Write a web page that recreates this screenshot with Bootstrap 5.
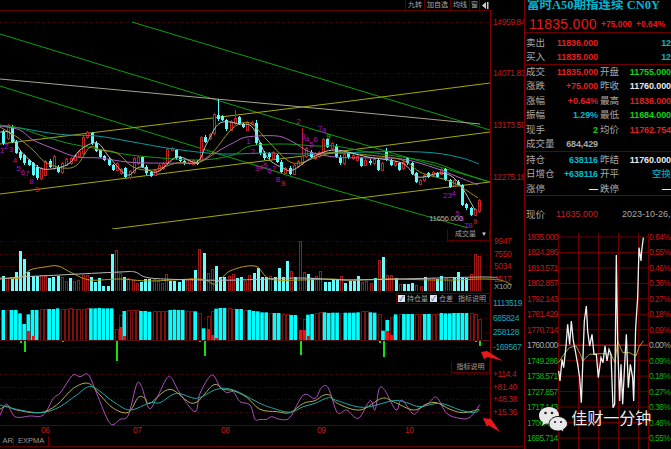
<!DOCTYPE html>
<html lang="zh-CN">
<head>
    <meta charset="UTF-8">
    <meta name="viewport" content="width=device-width, initial-scale=1.0">
    <title>富时A50期指连续</title>
    <link href="https://cdn.jsdelivr.net/npm/bootstrap@5.3.0/dist/css/bootstrap.min.css" rel="stylesheet">
    <style>
        html, body {
            background-color: #000;
            margin: 0;
            height: 449px;
            overflow: hidden;
            font-family: "Liberation Sans", "Noto Sans CJK SC", sans-serif;
            font-size: 9px;
            line-height: 1;
            color: #a8a8a8;
        }
        svg { display: block; }
        svg text { font-family: "Liberation Sans", "Noto Sans CJK SC", sans-serif; letter-spacing: -.4px; }
        #tickChart text { letter-spacing: -.6px; }
        .chart-pane { width: 524px; height: 449px; flex: none; }
        .top-tabs { height: 10px; padding-right: 34px; }
        .top-tab {
            border-left: 1px solid #5a0000;
            padding: 0 2px;
            height: 10px;
            line-height: 9px;
            color: #a8a8a8;
            font-size: 7px;
            overflow: hidden;
        }
        .tab-narrow { padding: 0 1px; }
        .panel-box {
            top: 0;
            right: 34px;
            background: #000;
            border: 1px solid #5a0000;
            color: #a0a0a0;
            line-height: 10px;
            font-size: 7px;
            white-space: nowrap;
        }
        .vol-box { width: 43px; height: 12px; border-top: 0; padding-left: 7px; }
        .vol-box .caret-mark { position: absolute; right: 2px; top: 0; font-size: 6px; color: #ccc; }
        .oi-box { top: 2px; height: 11px; width: 94px; padding-left: 1px; gap: 2px; }
        .oi-check {
            display: inline-block;
            width: 7px;
            height: 7px;
            background: #dfe6f2;
            color: #2a4a9a;
            font-size: 7px;
            line-height: 7px;
            text-align: center;
        }
        .oi-note { margin-left: 3px; }
        .ind-box { width: 39px; height: 11px; top: 1px; border-top: 0; text-align: center; }
        .tab-row { height: 11px; border-bottom: 1px solid #5a0000; width: 524px; }
        .tab-item {
            height: 10px;
            padding: 0 4px;
            line-height: 10px;
            border-right: 1px solid #6a0000;
            color: #9a9a9a;
            font-size: 7.5px;
        }
        .tab-first { width: 14px; padding: 0; text-align: right; }
        .arrow-layer { top: 0; left: 0; pointer-events: none; }

        .quote-pane { width: 147px; height: 449px; flex: none; border-left: 1px solid #800000; overflow: hidden; }
        .quote-title {
            height: 12px;
            padding-left: 2px;
            color: #00b7cc;
            font-family: "Liberation Serif", "Noto Sans CJK SC", serif;
            font-weight: 700;
            font-size: 12.5px;
            line-height: 11px;
            white-space: nowrap;
            overflow: hidden;
        }
        .quote-price { height: 21px; padding: 6px 0 0 4px; color: #e81818; border-bottom: 1px solid #6a0000; }
        .price-big { font-size: 14px; letter-spacing: .3px; width: 74px; line-height: 12px; }
        .price-small { font-size: 8.5px; font-weight: 700; line-height: 12px; width: 36px; }
        .quote-block { border-bottom: 1px solid #6a0000; }
        .block-bid { height: 32px; padding-top: 3px; }
        .block-trade { height: 87px; }
        .block-hold { height: 44px; padding-top: 1px; border-bottom-color: #800000; }
        .quote-row { height: 14.4px; line-height: 14.4px; padding-left: 1px; white-space: nowrap; }
        .quote-cell { width: 72px; flex: none; }
        .quote-cell + .quote-cell { width: 71px; margin-left: 2px; }
        .quote-lab { font-size: 9.5px; color: #a8a8a8; }
        .quote-num { font-size: 9px; font-weight: 700; letter-spacing: -.1px; }
        .q-red { color: #e02020; }
        .q-green { color: #10d010; }
        .q-cyan { color: #00b7cc; }
        .q-white { color: #e8e8e8; }
        .q-gray { color: #a8a8a8; }
        .now-row { height: 37px; padding: 14px 0 0 1px; white-space: nowrap; }
        .now-price { width: 72px; color: #c82020; font-size: 9px; text-align: right; }
        .now-date { margin-left: 24px; color: #a8a8a8; font-size: 9px; }
        .brand-mark { left: 13px; top: 173px; color: #eee; font-size: 16px; line-height: 20px; white-space: nowrap; }
    </style>
</head>
<body>
    <div class="d-flex">
        <div class="chart-pane position-relative">
            <div class="top-tabs d-flex justify-content-end">
                <div class="top-tab">九转</div>
                <div class="top-tab">加自选</div>
                <div class="top-tab">均线</div>
                <div class="top-tab tab-narrow">窗</div>
                <div class="top-tab tab-narrow d-flex align-items-center">
                    <svg width="8" height="7" viewBox="0 0 8 7"><path d="M5 0 1 3.5 5 7Z" fill="#ccc"/><rect x="6" y="0" width="1.5" height="7" fill="#ccc"/></svg>
                </div>
            </div>
            <svg id="mainChart" width="524" height="219" viewBox="0 10 524 219"></svg>
            <div class="position-relative">
                <svg id="volChart" width="524" height="62" viewBox="0 229 524 62"></svg>
                <div class="panel-box vol-box position-absolute">成交量<span class="caret-mark">▼</span></div>
            </div>
            <div class="position-relative">
                <svg id="oiChart" width="524" height="70" viewBox="0 291 524 70"></svg>
                <div class="panel-box oi-box position-absolute d-flex align-items-center">
                    <span class="oi-check">✓</span><span>持仓量</span>
                    <span class="oi-check">✓</span><span>仓差</span>
                    <span class="oi-note">指标说明</span>
                </div>
            </div>
            <div class="position-relative">
                <svg id="indChart" width="524" height="75" viewBox="0 361 524 75"></svg>
                <div class="panel-box ind-box position-absolute">指标说明</div>
            </div>
            <div class="tab-row d-flex">
                <div class="tab-item tab-first">AR</div>
                <div class="tab-item">EXPMA</div>
            </div>
            <svg class="arrow-layer position-absolute" width="524" height="449" viewBox="0 0 524 449">
                <polygon points="481,352 487,351 503,361 488,357 484,359" fill="#e81818"/>
                <polygon points="483,418 491,419 500,432 488,425 487,427" fill="#e81818"/>
            </svg>
        </div>

        <div class="quote-pane">
            <div class="quote-title">富时A50期指连续 CN0Y</div>
            <div class="quote-price d-flex">
                <span class="price-big">11835.000</span>
                <span class="price-small">+75.000</span>
                <span class="price-small">+0.64%</span>
            </div>
            <div class="quote-block block-bid">
                <div class="quote-row d-flex">
                    <div class="quote-cell d-flex justify-content-between"><span class="quote-lab">卖出</span><span class="quote-num q-red">11836.000</span></div>
                    <div class="quote-cell text-end"><span class="quote-num q-cyan">12</span></div>
                </div>
                <div class="quote-row d-flex">
                    <div class="quote-cell d-flex justify-content-between"><span class="quote-lab">买入</span><span class="quote-num q-red">11835.000</span></div>
                    <div class="quote-cell text-end"><span class="quote-num q-cyan">12</span></div>
                </div>
            </div>
            <div class="quote-block block-trade">
                <div class="quote-row d-flex">
                    <div class="quote-cell d-flex justify-content-between"><span class="quote-lab">成交</span><span class="quote-num q-red">11835.000</span></div>
                    <div class="quote-cell d-flex justify-content-between"><span class="quote-lab">开盘</span><span class="quote-num q-green">11755.000</span></div>
                </div>
                <div class="quote-row d-flex">
                    <div class="quote-cell d-flex justify-content-between"><span class="quote-lab">涨跌</span><span class="quote-num q-red">+75.000</span></div>
                    <div class="quote-cell d-flex justify-content-between"><span class="quote-lab">昨收</span><span class="quote-num q-white">11760.000</span></div>
                </div>
                <div class="quote-row d-flex">
                    <div class="quote-cell d-flex justify-content-between"><span class="quote-lab">涨幅</span><span class="quote-num q-red">+0.64%</span></div>
                    <div class="quote-cell d-flex justify-content-between"><span class="quote-lab">最高</span><span class="quote-num q-red">11836.000</span></div>
                </div>
                <div class="quote-row d-flex">
                    <div class="quote-cell d-flex justify-content-between"><span class="quote-lab">振幅</span><span class="quote-num q-cyan">1.29%</span></div>
                    <div class="quote-cell d-flex justify-content-between"><span class="quote-lab">最低</span><span class="quote-num q-green">11684.000</span></div>
                </div>
                <div class="quote-row d-flex">
                    <div class="quote-cell d-flex justify-content-between"><span class="quote-lab">现手</span><span class="quote-num q-green">2</span></div>
                    <div class="quote-cell d-flex justify-content-between"><span class="quote-lab">均价</span><span class="quote-num q-red">11762.754</span></div>
                </div>
                <div class="quote-row d-flex">
                    <div class="quote-cell d-flex justify-content-between"><span class="quote-lab">成交量</span><span class="quote-num q-gray">684,429</span></div>
                </div>
            </div>
            <div class="quote-block block-hold">
                <div class="quote-row d-flex">
                    <div class="quote-cell d-flex justify-content-between"><span class="quote-lab">持仓</span><span class="quote-num q-cyan">638116</span></div>
                    <div class="quote-cell d-flex justify-content-between"><span class="quote-lab">昨结</span><span class="quote-num q-white">11760.000</span></div>
                </div>
                <div class="quote-row d-flex">
                    <div class="quote-cell d-flex justify-content-between"><span class="quote-lab">日增仓</span><span class="quote-num q-cyan">+638116</span></div>
                    <div class="quote-cell d-flex justify-content-between"><span class="quote-lab">开平</span><span class="quote-lab q-cyan">空换</span></div>
                </div>
                <div class="quote-row d-flex">
                    <div class="quote-cell d-flex justify-content-between"><span class="quote-lab">涨停</span><span class="quote-num q-white">—</span></div>
                    <div class="quote-cell d-flex justify-content-between"><span class="quote-lab">跌停</span><span class="quote-num q-white">—</span></div>
                </div>
            </div>
            <div class="now-row d-flex">
                <div class="d-flex justify-content-between quote-cell"><span class="quote-lab">现价</span><span class="now-price">11835.000</span></div>
                <span class="now-date">2023-10-26,周四</span>
            </div>
            <div class="position-relative">
                <svg id="tickChart" width="147" height="217" viewBox="524 232 147 217"></svg>
                <div class="brand-mark position-absolute d-flex align-items-center">
                    <svg width="31" height="26" viewBox="0 0 31 26" class="me-1">
                        <path d="M11 1C5 1 1 5 1 9.500 1 12.500 2.500 14.800 5 16.300L4 19.500 7.800 17.500C9 17.800 10 18 11 18 17 18 21 14 21 9.500 21 5 17 1 11 1Z" fill="#e8e8e8"/>
                        <circle cx="7.500" cy="7" r="1.300" fill="#222"/><circle cx="14" cy="7" r="1.300" fill="#222"/>
                        <path d="M20 10.500C15 10.500 11 14 11 18 11 22 15 25 20 25 21 25 22 24.900 23 24.600L26 26 25.300 23.500C27.800 22 29.500 20.200 29.500 18 29.500 14 25 10.500 20 10.500Z" fill="#e8e8e8" stroke="#111"/>
                        <circle cx="17" cy="16" r="1.100" fill="#222"/><circle cx="23" cy="16" r="1.100" fill="#222"/>
                    </svg>
                    <span>佳财一分钟</span>
                </div>
            </div>
        </div>
    </div>

    <script>
        // candle tops/bottoms read off the chart at 3x, hence the /3 below
        const candles = ("c395,430 r375,415 c380,425 c425,458 c455,475 c465,490 c480,495 c490,525 c500,535 r505,535 r485,525 c482,500 r470,505 c500,515 r490,518 r478,495 r475,490 r465,480 r455,470 r412,460 " +
            "r397,412 c400,430 c428,452 c450,470 c468,480 c478,495 c495,510 r490,510 r508,520 c505,530 r515,533 r475,518 r472,490 c472,500 c500,520 c517,527 r510,525 r495,510 r490,505 r447,490 " +
            "r445,450 c450,475 c472,482 c482,490 r480,490 r480,492 c485,492 r412,480 c410,425 r402,415 r343,400 c345,358 c348,360 c360,388 r363,390 r355,370 c352,372 c372,380 r368,390 r366,372 " +
            "c370,430 c430,460 c458,475 c460,472 r458,475 c465,485 c485,515 r505,520 c503,522 r495,522 r485,500 r470,490 r445,470 c455,470 r460,475 r458,470 r418,458 c418,440 r430,445 c437,470 " +
            "c470,490 r462,490 c460,472 r465,475 r468,480 c475,497 r480,495 c482,490 r478,490 c480,510 r490,510 c452,480 c480,495 r487,497 c490,510 r487,505 c475,490 c490,522 c520,545 r540,552 " +
            "r525,542 c520,530 r518,525 c520,530 r507,522 c507,540 c540,560 r540,556 c545,555 c555,615 c612,625 c625,645 r628,645 r600,635").split(" ");
        const wickOverride = { 51: 298, 55: 330, 60: 360, 71: 385, 91: 445, 113: 596 };

        const volBars = ("c124 r130 c132 c110 c47 c72 c112 c122 c122 r120 r125 c130 c125 c124 r128 r138 c130 r138 r135 r120 r122 c125 c140 c130 c153 c152 c58 r45 r115 c127 r130 r136 r145 c140 c133 c133 r133 r139 r145 r118 " +
            "c137 c137 c140 c133 r135 r130 c105 r42 c53 r115 r102 c92 c127 c127 r125 r118 c130 c125 r138 r120 c113 c100 c127 c127 r125 c125 c100 c125 c77 r110 c125 r20 r112 c117 c128 r125 r110 c140 c140 c133 c133 r125 " +
            "c145 c137 c137 c122 r143 r140 r145 c128 r77 c67 r120 r122 c130 r148 c148 c148 c145 r150 r155 c125 r133 r130 c133 c122 r130 r138 c125 c110 c125 c130 r118 r58 r63").split(" ");

        const oiBars = ("c225 r225 c225 c225 c235 c267 c238:287 c225:303 c225 r223 r224 c222 c222 c220 r224 r223 r220 r223 r223 r223 r219 c220 c220 c219 c220 c220 c220 r283 r242:276 c228:303 r226 r226 r226 c228 c228 c230 r229 r229 r229 r229 " +
            "c225 c224 c225 c225 r229 r229 c229 r234 c280 r244:282 r228:300 c221:310 c219 c219 r220 r223 c222 c222 r226 c225 c228 c229 c232 c232 r234 c234 c234 r238 r238 c240 c240 r285:285 r252:285 c239:303 c237 r235 r233 c232 c234 c233 c233 r234 " +
            "c233 c233 c233 c232 r229 r229 c232 c233 r238 c287 c255:287 r246:300 c238 r238 c237 c237 c237 r238 r238 c237 c237 r237 r238 c234 c235 c235 c234 c234 c234 c234 r234 r238 r253").split(" ");
        const oiDown = { 4: 324, 5: 350, 14: 320, 27: 378, 47: 321, 48: 362, 71: 360, 90: 323, 91: 365, 113: 320, 114: 332 };

        const tdDigits = [
            ["1",5,450,"#b010c0"],["2",18,438,"#b010c0"],["3",32,448,"#b010c0"],["4",44,480,"#b010c0"],["5",55,505,"#b010c0"],["6",68,515,"#b010c0"],["7",82,520,"#b010c0"],["8",94,542,"#b010c0"],["9",110,567,"#e02020"],
            ["1",745,423,"#b010c0"],["2",758,452,"#b010c0"],["3",770,503,"#b010c0"],["4",783,500,"#b010c0"],["5",796,495,"#b010c0"],["6",808,510,"#b010c0"],["7",821,505,"#b010c0"],["8",833,537,"#b010c0"],["9",849,549,"#e02020"],
            ["2",895,362,"#b010c0"],["3",910,408,"#b010c0"],["4",921,418,"#b010c0"],["5",934,432,"#b010c0"],["6",946,418,"#b010c0"],["7",960,385,"#b010c0"],["8",972,390,"#b010c0"],["9",985,407,"#20c020"],
            ["2",1335,585,"#b010c0"],["3",1348,585,"#b010c0"],["4",1360,580,"#b010c0"],["5",1372,638,"#b010c0"],["6",1385,655,"#b010c0"],["7",1398,675,"#b010c0"],["8",1411,675,"#b010c0"],["9",1425,663,"#e02020"],["9",1438,612,"#e02020"]
        ];

        const trendLines = [
            ["#0aa00a", "132,22 335,83 490,130"],
            ["#0aa00a", "0,34 213,99 335,136 490,182"],
            ["#0aa00a", "0,86 335,190 468,228"],
            ["#a8a800", "0,144 335,103 490,83"],
            ["#a8a800", "0,194 335,152 490,132"],
            ["#a8a800", "112,229 335,201 490,182"],
            ["#a8a48c", "0,79 335,110 480,124"]
        ];
        const maLines = [
            ["#0a9aa0", "0,126 20,128 43,132 67,135 97,136 133,142 167,148 207,153 233,154 267,153 300,154 335,153 368,152 402,151.5 435,153 462,158 479,164"],
            ["#109a10", "0,125 20,128 40,135 67,143 93,148 117,153 150,157 200,160 233,155 250,146 283,144 317,146 335,146 368,152 402,157 435,163 462,173 490,182"],
            ["#b060c0", "0,126 20,130 33,140 57,150 77,157 100,158 127,162 150,163 183,163 200,162 220,150 233,143 247,137 277,136 293,142 310,152 335,157 368,158 402,159 435,168 458,177 478,185"],
            ["#a09010", "0,127 17,137 33,150 45,162 63,168 77,165 90,147 100,150 117,153 133,167 153,170 177,163 197,163 213,152 233,128 250,123 267,140 287,160 300,163 317,157 335,153 368,155 402,160 422,173 452,182 478,198"],
            ["#c0c0c0", "0,132 10,133 20,150 33,163 43,169 57,168 70,163 80,150 97,143 110,158 127,175 140,167 157,172 177,157 197,162 207,143 220,123 240,124 253,128 267,157 283,168 293,170 313,157 335,150 368,157 402,163 418,177 442,173 458,182 475,210"]
        ];

        // indicator curves: [left half at 3x from x=0, right half at 3x from x=260]
        const indCurves = [
            ["#b050c0", "0,166 20,132 45,170 90,168 130,165 160,115 180,100 200,70 220,44 240,50 265,44 290,100 330,190 360,178 385,165 410,73 425,80 447,145 470,115 500,55 515,55 540,100 585,155 600,100 635,45 660,80 680,98 700,95 720,125 750,135 765,178",
                "0,178 20,178 35,170 60,178 90,172 130,105 165,115 185,82 205,84 232,158 260,150 295,175 330,122 345,150 358,85 375,92 408,150 425,120 460,162 480,145 505,130 530,112 560,160 600,175 630,172 660,133"],
            ["#b0b050", "0,148 20,138 50,150 120,158 170,135 220,85 265,70 300,105 340,145 385,157 415,112 435,115 450,130 510,88 580,130 640,75 670,88 700,92 740,112",
                "0,148 50,155 90,158 130,130 165,122 190,106 210,106 232,130 300,150 365,115 400,125 460,150 500,132 530,128 570,148 610,158 658,148"],
            ["#20a8a8", "0,135 60,150 125,158 180,140 230,105 275,80 340,125 390,150 450,128 480,128 530,100 590,115 650,88 700,90",
                "0,130 40,145 90,157 130,140 165,130 205,113 232,122 310,142 400,122 440,128 480,140 540,130 600,150 640,158 658,152"]
        ];

        const tickLine = "113,420 117,450 123,385 128,410 135,345 140,280 146,340 151,270 157,330 163,360 170,400 176,440 181,515 187,350 190,270 196,225 200,300 206,345 213,310 219,370 226,370 232,440 240,380 246,395 252,345 258,390 264,355 270,370 276,530 281,520 286,72 290,340 296,510 300,400 305,520 312,380 316,310 322,470 328,400 335,440 338,510 344,290 350,200 354,50 360,90 362,60 367,20";
        const tickAvg = "113,395 125,375 145,350 165,345 178,370 185,390 205,370 240,368 270,370 282,395 290,330 305,365 325,365 345,375 355,345 367,330";
        const tickLeft = ["1835.000","1824.286","1813.571","1802.857","1792.143","1781.429","1770.714","1760.000","1749.286","1738.571","1727.857","1717.143","1706.429","1695.714"];
        const tickRight = ["0.64%","0.55%","0.46%","0.36%","0.27%","0.18%","0.09%","0.00%","0.09%","0.18%","0.27%","0.36%","0.46%","0.55%"];

        const GRID = "#5c0000";
        const barX = (i, n) => 3.3 + (479 - 3.3) / (n - 1) * i;

        function hline(y, dotted, x2) {
            return `<line x1="0" x2="${x2 || 490}" y1="${y}" y2="${y}" stroke="${GRID}" ${dotted ? 'stroke-dasharray="1 2"' : ''}/>`;
        }
        function vaxis(y1, y2) {
            return `<line x1="490.5" x2="490.5" y1="${y1}" y2="${y2}" stroke="#800000"/>`;
        }
        function label(x, y, txt, color, size) {
            return `<text x="${x}" y="${y + 3}" fill="${color}" font-size="${size || 8.5}">${txt}</text>`;
        }
        function line(points, color, width) {
            return `<polyline points="${points}" fill="none" stroke="${color}" stroke-width="${width || 1}"/>`;
        }
        // catmull-rom through the traced points so the averages don't look polygonal
        function smooth(points, color) {
            const p = points.trim().split(" ").map(a => a.split(",").map(Number));
            let d = `M${p[0][0]} ${p[0][1]}`;
            for (let i = 0; i < p.length - 1; i++) {
                const a = p[i - 1] || p[i], b = p[i], c = p[i + 1], e = p[i + 2] || c;
                d += `C${b[0] + (c[0] - a[0]) / 6} ${b[1] + (c[1] - a[1]) / 6} ${c[0] - (e[0] - b[0]) / 6} ${c[1] - (e[1] - b[1]) / 6} ${c[0]} ${c[1]}`;
            }
            return `<path d="${d}" fill="none" stroke="${color}"/>`;
        }
        function rect(x, y, w, h, fill, stroke) {
            return `<rect x="${x}" y="${y}" width="${w}" height="${h}" fill="${fill}" ${stroke ? `stroke="${stroke}"` : ''} shape-rendering="crispEdges"/>`;
        }
        function scaled(str, ox, oy) {
            return str.split(" ").map(p => {
                const [x, y] = p.split(",").map(Number);
                return `${ox + x / 3},${oy + y / 3}`;
            }).join(" ");
        }

        function drawMain() {
            let s = hline(10.5) + hline(229.5) + vaxis(10, 229);
            [22, 73, 125, 177].forEach(y => s += hline(y + .5, true));
            [["14959.842", 22], ["14071.833", 73], ["13173.505", 125], ["12275.186", 177]].forEach(a => s += label(493, a[1], a[0], "#c01818"));
            trendLines.forEach(l => s += line(l[1], l[0]));
            candles.forEach((c, i) => {
                const [t, b] = c.slice(1).split(",").map(Number);
                const x = Math.round(barX(i, candles.length));
                const color = c[0] === "c" ? "#55ffff" : "#c02020";
                const wt = (wickOverride[i] || t - 4) / 3;
                s += `<line x1="${x + .5}" x2="${x + .5}" y1="${wt}" y2="${(b + 4) / 3}" stroke="${color}" shape-rendering="crispEdges"/>`;
                if (c[0] === "c") s += rect(x - 1, t / 3, 3, (b - t) / 3, color);
                else s += rect(x - .5, t / 3, 2, (b - t) / 3, "#000", color);
            });
            maLines.forEach(l => s += smooth(l[1], l[0]));
            tdDigits.forEach(d => s += label(d[1] / 3 - 2, d[2] / 3, d[0], d[3], 8));
            s += label(429, 218, "11656.000", "#a8a8a8", 8);
            document.getElementById("mainChart").innerHTML = s;
        }

        function drawVol() {
            let s = hline(291.5) + vaxis(229, 291);
            [241, 254, 266, 279].forEach(y => s += hline(y + .5, true));
            volBars.forEach((b, i) => {
                const top = 235 + Number(b.slice(1)) / 3;
                const x = Math.round(barX(i, volBars.length));
                if (b[0] === "c") s += rect(x - 1, top, 3, 291 - top, "#66ffff");
                else s += rect(x - .5, top, 2, 291 - top, "#000", "#a01818");
            });
            s += smooth("0,278 20,278 30,270 45,267 58,266 72,273 90,280 120,279 150,281 200,279 215,284 230,271 255,266 270,279 300,280 330,279 350,280 390,279 430,280 440,280 455,280 480,279 500,280 512,285", "#b0a010");
            s += smooth("0,279 20,277 60,275 120,272 135,272 150,278 200,280 240,280 300,278 345,280 400,279 480,277 498,278", "#bbb");
            [["9947", 241], ["7550", 254], ["5034", 266], ["2517", 279]].forEach(a => s += label(494, a[1], a[0], "#c01818"));
            s += label(494, 286, "X100", "#a0a0a0", 8);
            document.getElementById("volChart").innerHTML = s;
        }

        function drawOi() {
            let s = hline(361.5) + vaxis(291, 361);
            [303, 318, 332, 347].forEach(y => s += hline(y + .5, true));
            oiBars.forEach((b, i) => {
                const [v, inner] = b.slice(1).split(":").map(Number);
                const top = 235 + v / 3;
                const x = barX(i, oiBars.length);
                if (b[0] === "c") s += `<rect x="${x - 1.8}" y="${top}" width="3.600" height="${340 - top}" fill="#00ffff"/>`;
                else s += rect(Math.round(x) - 1, top, 3, 340 - top, "#000", "#801010");
                if (inner) s += rect(Math.round(x) - 1, 235 + inner / 3, 3, 340 - 235 - inner / 3, "#f01010");
                if (oiDown[i]) s += rect(Math.round(x) - .5, 340, 2, oiDown[i] / 3 + 235 - 340, "#10e010");
            });
            s += `<line x1="0" x2="490" y1="340.5" y2="340.5" stroke="#501010"/>`;
            [["1113519", 303], ["685824", 318], ["258128", 332], ["-169567", 347]].forEach(a => s += label(493, a[1], a[0], "#10a8b8"));
            document.getElementById("oiChart").innerHTML = s;
        }

        function drawInd() {
            let s = hline(425.5) + vaxis(361, 426);
            [374, 387, 399, 412].forEach(y => s += hline(y + .5, true));
            indCurves.forEach(c => s += smooth(scaled(c[1], 0, 360) + " " + scaled(c[2], 260, 360), c[0]));
            [["+114.4", 374], ["+81.40", 387], ["+48.38", 399], ["+15.36", 412]].forEach(a => s += label(493, a[1], a[0], "#c01818"));
            [["06", 41, 430], ["07", 133, 430], ["08", 221, 430], ["09", 317, 430], ["10", 405, 430]].forEach(a => s += label(a[1], a[2], a[0], "#c01818"));
            document.getElementById("indChart").innerHTML = s;
        }

        function drawTick() {
            let s = "";
            const yAt = i => 236 + i * 15.46;
            [557, 577, 597, 617, 637, 647].forEach(x => s += `<line x1="${x + .5}" x2="${x + .5}" y1="232" y2="449" stroke="#6a0000"/>`);
            tickLeft.forEach((t, i) => {
                const y = yAt(i);
                if (i !== 7) s += `<line x1="557" x2="647" y1="${y}" y2="${y}" stroke="#6a0000"/>`;
                const color = i < 7 ? "#c01818" : i === 7 ? "#a8a8a8" : "#10b010";
                s += label(526, y, t, color);
                s += label(648, y, tickRight[i], color);
            });
            s += `<line x1="557" x2="647" y1="${yAt(7)}" y2="${yAt(7)}" stroke="#b01010" stroke-width="1.500"/>`;
            s += line(scaled(tickAvg, 520, 230), "#a89a30");
            s += line(scaled(tickLine, 520, 230), "#f2f2f2", 1.300);
            document.getElementById("tickChart").innerHTML = s;
        }

        document.addEventListener("DOMContentLoaded", () => {
            drawMain();
            drawVol();
            drawOi();
            drawInd();
            drawTick();
        });
    </script>
    <script src="https://cdn.jsdelivr.net/npm/bootstrap@5.3.0/dist/js/bootstrap.bundle.min.js"></script>
</body>
</html>
